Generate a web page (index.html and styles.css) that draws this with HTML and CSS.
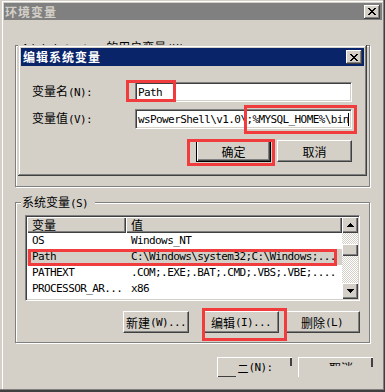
FILE: index.html
```html
<!DOCTYPE html>
<html>
<head>
<meta charset="utf-8">
<title>环境变量</title>
<link rel="stylesheet" href="styles.css">
</head>
<body>
<div class="win">
  <div class="caption">
    <span class="cap-text">环境变量</span>
    <span class="xbtn"><svg width="8" height="7" viewBox="0 0 8 7"><path d="M0 0h2v1h-2zM6 0h2v1h-2zM1 1h2v1h-2zM5 1h2v1h-2zM2 2h4v1h-4zM3 3h2v1h-2zM2 4h4v1h-4zM1 5h2v1h-2zM5 5h2v1h-2zM0 6h2v1h-2zM6 6h2v1h-2z" fill="#000"/></svg></span>
  </div>
  <div class="client">
    <fieldset class="group user">
      <legend><span class="lg-text"><span class="m">Administrator </span>的用户变量<span class="m">(U)</span></span></legend>
    </fieldset>
    <fieldset class="group sys">
      <legend>系统变量<span class="m">(S)</span></legend>
      <div class="listview">
        <div class="lv-main">
          <div class="lv-head">
            <div class="hcell c1">变量</div>
            <div class="hcell c2">值</div>
          </div>
          <div class="row"><span class="c1 m">OS</span><span class="c2 m">Windows_NT</span></div>
          <div class="row sel"><span class="c1 m">Path</span><span class="c2 m">C:\Windows\system32;C:\Windows;...</span></div>
          <div class="row"><span class="c1 m">PATHEXT</span><span class="c2 m">.COM;.EXE;.BAT;.CMD;.VBS;.VBE;....</span></div>
          <div class="row"><span class="c1 m">PROCESSOR_AR...</span><span class="c2 m">x86</span></div>
        </div>
        <div class="vscroll">
          <div class="sbtn"><svg width="7" height="4" viewBox="0 0 7 4"><path d="M3 0h1v1h-1zM2 1h3v1h-3zM1 2h5v1h-5zM0 3h7v1h-7z" fill="#000"/></svg></div>
          <div class="track"><div class="thumb"></div></div>
          <div class="sbtn"><svg width="7" height="4" viewBox="0 0 7 4"><path d="M0 0h7v1h-7zM1 1h5v1h-5zM2 2h3v1h-3zM3 3h1v1h-1z" fill="#000"/></svg></div>
        </div>
      </div>
      <div class="btnrow">
        <div class="btn b-new">新建<span class="m">(W)...</span></div>
        <div class="btn b-edit">编辑<span class="m">(I)...</span></div>
        <div class="btn b-del">删除<span class="m">(L)</span></div>
      </div>
    </fieldset>
    <div class="bottom-row">
      <div class="btn glitch g1"><span class="frag">二</span><span class="m">(N):</span></div>
      <div class="btn glitch g2"><span class="clip">取消</span></div>
    </div>
  </div>

  <div class="dialog">
    <div class="dcap">
      <span class="dcap-text">编辑系统变量</span>
      <span class="xbtn"><svg width="8" height="7" viewBox="0 0 8 7"><path d="M0 0h2v1h-2zM6 0h2v1h-2zM1 1h2v1h-2zM5 1h2v1h-2zM2 2h4v1h-4zM3 3h2v1h-2zM2 4h4v1h-4zM1 5h2v1h-2zM5 5h2v1h-2zM0 6h2v1h-2zM6 6h2v1h-2z" fill="#000"/></svg></span>
    </div>
    <div class="dbody">
      <div class="form">
        <label class="lbl">变量名<span class="m">(N):</span></label>
        <div class="edit"><span class="m">Path</span></div>
        <label class="lbl">变量值<span class="m">(V):</span></label>
        <div class="edit"><span class="m">wsPowerShell\v1.0\;%MYSQL_HOME%\bin</span><span class="caret"></span></div>
      </div>
      <div class="dbtns">
        <div class="btn default">确定</div>
        <div class="btn">取消</div>
      </div>
    </div>
  </div>

  <div class="mark mk1"></div>
  <div class="mark mk2"></div>
  <div class="mark mk3"></div>
  <div class="mark mk4"></div>
  <div class="mark mk5"></div>
</div>
</body>
</html>
```

FILE: styles.css
```css
* { box-sizing: border-box; }
html, body { margin: 0; padding: 0; }
body {
  width: 385px;
  height: 392px;
  overflow: hidden;
  background: #d4d0c8;
  font-family: "Noto Sans CJK SC", sans-serif;
  font-size: 12px;
  color: #000;
}
.m {
  font-family: "DejaVu Sans Mono", monospace;
  font-size: 11px;
  letter-spacing: -0.6px;
}

/* outer window */
.win {
  position: relative;
  width: 385px;
  height: 392px;
  padding: 3px 3px 3px 4px;
  background: #d4d0c8;
  box-shadow:
    inset -1px 0 #404040,
    inset 0 -2px #404040,
    inset -2px 0 #808080,
    inset 0 -3px #808080,
    inset 2px 0 #d4d0c8,
    inset 0 1px #d4d0c8,
    inset 3px 0 #fff,
    inset 0 2px #fff;
}
.caption {
  height: 17px;
  background: #808080;
  display: flex;
  align-items: center;
  padding-left: 1px;
}
.cap-text {
  color: #d4d0c8;
  font-weight: bold;
  letter-spacing: 1px;
  line-height: 17px;
}
.xbtn {
  margin-left: auto;
  margin-right: 2px;
  width: 16px;
  height: 14px;
  background: #d4d0c8;
  box-shadow: inset -1px -1px #404040, inset 1px 1px #fff, inset -2px -2px #808080;
  display: flex;
  align-items: center;
  justify-content: center;
}
.xbtn svg { display: block; }

.client { padding-left: 11px; }

/* group boxes */
.group {
  margin: 0;
  padding: 0 9px;
  width: 355px;
  min-width: 0;
  border: 1px solid #808080;
  box-shadow: inset 1px 1px #fff, 1px 1px #fff;
}
.group legend {
  padding: 0 7px 0 1px;
  margin-left: -4px;
  height: 14px;
  line-height: 14px;
  background: #d4d0c8;
  white-space: nowrap;
}
.lg-text {
  display: block;
  height: 14px;
  line-height: 17px;
}
.user { margin-top: 18px; height: 149px; }
.sys { margin-top: 8px; height: 148px; padding-top: 6px; }

/* list view */
.listview {
  width: 335px;
  height: 86px;
  display: flex;
  padding: 1px;
  background: #fff;
  border: 1px solid;
  border-color: #808080 #fff #fff #808080;
  box-shadow: inset 1px 1px #404040, inset -1px -1px #d4d0c8;
}
.lv-main { flex: 1; min-width: 0; }
.lv-head { display: flex; height: 16px; }
.hcell {
  height: 16px;
  line-height: 16px;
  padding-left: 5px;
  background: #d4d0c8;
  box-shadow: inset 1px 1px #fff, inset -1px -1px #404040, inset -2px -2px #808080;
}
.c1 { width: 99px; flex: none; padding-left: 5px; }
.c2 { flex: 1; padding-left: 5px; white-space: nowrap; }
.row {
  display: flex;
  height: 16px;
  line-height: 16px;
  white-space: nowrap;
}
.row.sel { background: #d4d0c8; }

.vscroll {
  width: 16px;
  display: flex;
  flex-direction: column;
}
.sbtn, .thumb {
  background: #d4d0c8;
  box-shadow: inset 1px 1px #fff, inset -1px -1px #404040, inset -2px -2px #808080;
}
.sbtn {
  height: 16px;
  display: flex;
  align-items: center;
  justify-content: center;
}
.sbtn svg { display: block; }
.track {
  flex: 1;
  background: repeating-conic-gradient(#d4d0c8 0 25%, #fff 0 50%) 0 0 / 2px 2px;
}
.thumb { margin-top: 11px; height: 12px; }

/* buttons */
.btn {
  height: 22px;
  background: #d4d0c8;
  border: 1px solid;
  border-color: #fff #404040 #404040 #fff;
  box-shadow: inset -1px -1px #808080;
  display: flex;
  align-items: center;
  justify-content: center;
  white-space: nowrap;
}
.btn.default {
  border-color: #000;
  box-shadow: inset 1px 1px #fff, inset -1px -1px #404040, inset -2px -2px #808080;
}
.btnrow {
  display: flex;
  justify-content: flex-end;
  margin-top: 10px;
}
.b-new { width: 66px; }
.b-edit { width: 76px; margin-left: 14px; }
.b-del { width: 76px; margin-left: 5px; }

.bottom-row {
  display: flex;
  justify-content: flex-end;
  gap: 6px;
  margin-top: 14px;
  padding-right: 9px;
}
.glitch {
  width: 75px;
  height: 20px;
  border-style: solid;
  border-width: 1px 0 0 1px;
  border-color: #fff;
  box-shadow: none;
}
.g1 {
  background:
    linear-gradient(#404040, #404040) right top / 2px 8px no-repeat,
    linear-gradient(#404040, #404040) left bottom / 18px 1px no-repeat,
    #d4d0c8;
}
.g2 {
  align-items: flex-start;
  padding-top: 3px;
  background:
    linear-gradient(#404040, #404040) right top / 2px 9px no-repeat,
    #d4d0c8;
}
.frag { font-size: 11px; }
.clip {
  display: block;
  height: 5px;
  overflow: hidden;
  line-height: 14px;
  margin-left: 10px;
}

/* edit dialog (overlapping) */
.dialog {
  position: absolute;
  left: 18px;
  top: 45px;
  width: 349px;
  height: 131px;
  padding: 3px;
  background: #d4d0c8;
  box-shadow:
    inset -1px -1px #404040,
    inset 1px 1px #d4d0c8,
    inset -2px -2px #808080,
    inset 2px 2px #fff;
}
.dcap {
  height: 18px;
  background: #0a246a;
  display: flex;
  align-items: center;
  padding-left: 2px;
}
.dcap-text {
  color: #fff;
  font-weight: bold;
  letter-spacing: 1px;
  line-height: 18px;
}
.dbody { padding: 16px 12px 0 11px; }
.form {
  display: grid;
  grid-template-columns: 103px 217px;
  row-gap: 7px;
  align-items: center;
}
.lbl { white-space: nowrap; line-height: 14px; }
.edit {
  height: 20px;
  background: #fff;
  border: 1px solid;
  border-color: #808080 #fff #fff #808080;
  box-shadow: inset 1px 1px #404040, inset -1px -1px #d4d0c8;
  padding-left: 2px;
  display: flex;
  align-items: center;
  overflow: hidden;
  white-space: nowrap;
}
.caret {
  display: inline-block;
  width: 1px;
  height: 13px;
  background: #000;
  margin-left: -1px;
  flex: none;
}
.dbtns {
  display: flex;
  justify-content: flex-end;
  gap: 6px;
  margin-top: 11px;
}
.dbtns .btn { width: 75px; }

/* red annotation boxes */
.mark {
  position: absolute;
  border: 3px solid #f03c3c;
}
.mk1 { left: 126px; top: 80px; width: 50px; height: 22px; }
.mk2 { left: 244px; top: 105px; width: 113px; height: 29px; }
.mk3 { left: 187px; top: 139px; width: 88px; height: 27px; }
.mk4 { left: 28px; top: 249px; width: 309px; height: 17px; }
.mk5 { left: 202px; top: 308px; width: 85px; height: 33px; }
```
